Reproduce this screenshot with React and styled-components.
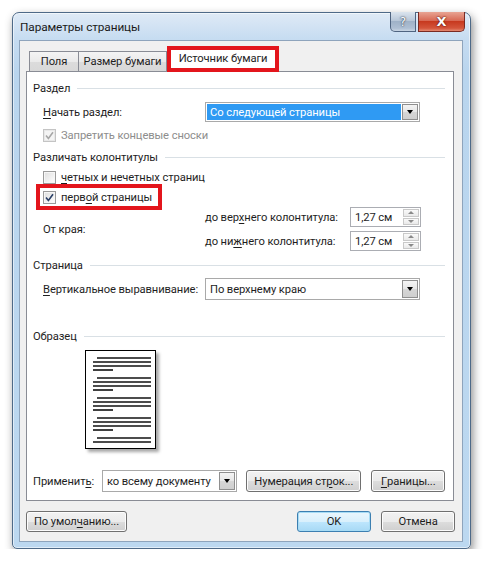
import React from "react";
import styled, { createGlobalStyle, css } from "styled-components";

const GlobalStyle = createGlobalStyle`
  html, body { margin: 0; padding: 0; background: #ffffff; }
  body {
    font-family: Roboto, "Noto Sans", sans-serif;
    font-size: 11.2px;
    letter-spacing: -0.1px;
    color: #1e1e1e;
  }
  * { box-sizing: border-box; }
`;

const Window = styled.div`
  margin: 12px 0 0 12px;
  width: 459px;
  height: 537px;
  border: 1px solid #4e6a88;
  border-radius: 7px 7px 5px 5px;
  background: linear-gradient(to bottom, #dfeaf6 0px, #c6dcf1 26px, #b9d5ee 60px, #bcd8f0 100%);
  box-shadow: 2px 4px 10px rgba(0, 0, 0, 0.45), inset 0 0 0 1px rgba(255, 255, 255, 0.55);
  display: flex;
  flex-direction: column;
`;

const TitleBar = styled.div`
  height: 27px;
  display: flex;
  align-items: flex-start;
`;

const TitleText = styled.div`
  padding-left: 7px;
  line-height: 29px;
  font-size: 11.8px;
  color: #1a1a1a;
  flex: 1;
`;

const CaptionButtons = styled.div`
  display: flex;
  gap: 2px;
  margin-right: 5px;
  margin-top: -1px;
`;

const CaptionButton = styled.div`
  height: 20px;
  display: flex;
  align-items: center;
  justify-content: center;
  border: 1px solid #4f6480;
  border-top: none;
  color: #fff;
  font-family: "DejaVu Sans", sans-serif;
  font-weight: bold;
  letter-spacing: 0;
  ${(p) =>
    p.$close
      ? css`
          width: 47px;
          border-radius: 0 0 5px 0;
          border-color: #7a2a22;
          background: linear-gradient(to bottom, #e8a493 0%, #d86a55 45%, #c7391f 50%, #d4553b 85%, #e48a72 100%);
          font-size: 13px;
          text-shadow: 0 0 2px #5a1008, 0 0 1px #5a1008;
        `
      : css`
          width: 26px;
          border-radius: 0 0 0 5px;
          background: linear-gradient(to bottom, #dbe4ee 0%, #b8c7d8 45%, #9fb2c8 50%, #aebfd3 85%, #c9d6e4 100%);
          font-size: 12px;
          font-weight: normal;
          text-shadow: 0 0 2px #2b3b50, 0 0 1px #2b3b50;
        `}
`;

const Client = styled.div`
  flex: 1;
  margin: 0 7px 6px 6px;
  background: #f0f0f0;
  border: 1px solid #8ea4bc;
  display: flex;
  flex-direction: column;
`;

const TabStrip = styled.div`
  margin-top: 5px;
  padding-left: 9px;
  height: 26px;
  display: flex;
  align-items: flex-end;
  position: relative;
  z-index: 2;
`;

const Tab = styled.div`
  height: 20px;
  display: flex;
  align-items: center;
  justify-content: center;
  width: ${(p) => p.$w}px;
  border: 1px solid #898c95;
  border-bottom: none;
  margin-right: -1px;
  margin-bottom: 1px;
  background: linear-gradient(to bottom, #f4f4f4 0%, #eaeaea 50%, #dcdcdc 51%, #d8d8d8 100%);
`;

const ActiveTab = styled.div`
  height: 26px;
  width: 112px;
  margin-left: 1px;
  border: 4px solid #e3151c;
  background: #ffffff;
  display: flex;
  align-items: center;
  justify-content: center;
  padding-bottom: 1px;
`;

const Panel = styled.div`
  margin: -1px 8px 0 6px;
  height: 430px;
  background: #ffffff;
  border: 1px solid #898c95;
  padding: 0 8px 0 6px;
  display: flex;
  flex-direction: column;
  position: relative;
  z-index: 1;
`;

const GroupTitle = styled.div`
  height: 16px;
  margin-top: ${(p) => p.$mt}px;
  display: flex;
  align-items: center;
  gap: 7px;
  &::after {
    content: "";
    flex: 1;
    height: 1px;
    background: #d9e0e5;
    margin-top: 1px;
  }
`;

const Row = styled.div`
  height: ${(p) => p.$h}px;
  margin-top: ${(p) => p.$mt}px;
  padding-left: 10px;
  display: flex;
  align-items: center;
`;

const Label = styled.span`
  width: ${(p) => (p.$w ? `${p.$w}px` : "auto")};
  flex-shrink: 0;
  white-space: nowrap;
  color: ${(p) => (p.$disabled ? "#8d8d8d" : "inherit")};
`;

const U = styled.span`
  text-decoration: underline;
  text-underline-offset: 2px;
`;

const Check = styled.span`
  width: 13px;
  height: 13px;
  flex-shrink: 0;
  margin-right: 5px;
  border: 1px solid ${(p) => (p.$disabled ? "#c4c4c4" : "#9a9a9a")};
  background: ${(p) =>
    p.$disabled
      ? "#f4f4f4"
      : "linear-gradient(135deg, #dedede 0%, #f1f1f1 60%, #ffffff 100%)"};
  box-shadow: inset 0 0 0 1px ${(p) => (p.$disabled ? "#e8e8e8" : "#f6f6f6")};
  display: flex;
  align-items: center;
  justify-content: center;
`;

const CheckMark = ({ color }) => (
  <svg width="9" height="9" viewBox="0 0 9 9">
    <path d="M1 4.5 L3.4 7.4 L8 1.2" fill="none" stroke={color} strokeWidth="1.6" />
  </svg>
);

const RedFrame = styled.div`
  display: inline-flex;
  align-items: center;
  border: 4px solid #e3151c;
  height: 26px;
  margin: -5px 0 -5px -7px;
  padding: 0 6px 0 3px;
`;

const Combo = styled.div`
  width: ${(p) => p.$w}px;
  height: ${(p) => p.$h}px;
  border: 1px solid #a9a9a9;
  background: #fff;
  display: flex;
  padding: 1px;
  gap: 1px;
`;

const ComboValue = styled.div`
  flex: 1;
  display: flex;
  align-items: center;
  padding-left: 3px;
  white-space: nowrap;
  overflow: hidden;
  ${(p) =>
    p.$selected &&
    css`
      background: #2f9af3;
      color: #ffffff;
    `}
`;

const DropButton = styled.div`
  width: 16px;
  border: 1px solid #8f8f8f;
  background: linear-gradient(to bottom, #f4f4f4 0%, #e6e6e6 50%, #d6d6d6 51%, #cfcfcf 100%);
  display: flex;
  align-items: center;
  justify-content: center;
`;

const Triangle = styled.span`
  width: 0;
  height: 0;
  border-left: 3.5px solid transparent;
  border-right: 3.5px solid transparent;
  border-top: 4px solid #000;
  ${(p) =>
    p.$up &&
    css`
      border-top: none;
      border-bottom: 3px solid #8a8a8a;
    `}
  ${(p) =>
    p.$small &&
    css`
      border-left-width: 3px;
      border-right-width: 3px;
      border-top-width: 3px;
      border-top-color: #8a8a8a;
    `}
`;

const MarginBlock = styled.div`
  margin-top: 2px;
  padding-left: 10px;
  display: flex;
  align-items: center;
`;

const MarginColumn = styled.div`
  display: flex;
  flex-direction: column;
  gap: 4px;
`;

const SpinRow = styled.div`
  height: 20px;
  display: flex;
  align-items: center;
`;

const Spin = styled.div`
  width: 71px;
  height: 20px;
  border: 1px solid #abadb3;
  background: #fff;
  display: flex;
  padding: 1px;
`;

const SpinValue = styled.div`
  flex: 1;
  display: flex;
  align-items: center;
  padding-left: 3px;
`;

const SpinButtons = styled.div`
  width: 16px;
  display: flex;
  flex-direction: column;
  gap: 1px;
`;

const SpinButton = styled.div`
  flex: 1;
  border: 1px solid #c9c9c9;
  background: linear-gradient(to bottom, #fafafa, #e9e9e9);
  display: flex;
  align-items: center;
  justify-content: center;
`;

const PreviewWrap = styled.div`
  margin-top: 6px;
  padding-left: 52px;
  display: flex;
`;

const PreviewPage = styled.div`
  width: 71px;
  height: 99px;
  border: 1px solid #000;
  background: #fff;
  box-shadow: 3px 3px 3px rgba(0, 0, 0, 0.35);
  display: flex;
`;

const ApplyRow = styled.div`
  margin-top: auto;
  margin-bottom: 8px;
  display: flex;
  align-items: center;
  height: 22px;
`;

const Button = styled.div`
  width: ${(p) => p.$w}px;
  height: ${(p) => p.$h || 21}px;
  margin-left: ${(p) => p.$ml || 0}px;
  border: 1px solid ${(p) => (p.$focus ? "#3c7fb1" : "#707070")};
  border-radius: 3px;
  background: linear-gradient(to bottom, #f2f2f2 0%, #ebebeb 50%, #dddddd 51%, #cfcfcf 100%);
  box-shadow: inset 0 0 0 1px ${(p) => (p.$focus ? "#a7dcf5" : "#fcfcfc")};
  display: flex;
  align-items: center;
  justify-content: center;
  white-space: nowrap;
  ${(p) =>
    p.$focus &&
    css`
      background: linear-gradient(to bottom, #eaf6fd 0%, #d9f0fc 50%, #bee6fd 51%, #a7d9f5 100%);
    `}
`;

const BottomRow = styled.div`
  margin-top: 10px;
  padding: 0 7px 0 6px;
  display: flex;
  align-items: center;
`;

const Spacer = styled.div`
  flex: 1;
`;

function PageLines() {
  const groups = [0, 20, 40, 60];
  const lines = [];
  groups.forEach((g) => {
    lines.push([11, 65, 7 + g]);
    lines.push([7, 65, 11 + g]);
    lines.push([7, 65, 15 + g]);
    lines.push([7, 27, 19 + g]);
  });
  lines.push([11, 65, 87]);
  lines.push([7, 65, 91]);
  return (
    <svg width="69" height="97" viewBox="0 0 69 97">
      {lines.map(([x1, x2, y], i) => (
        <line key={i} x1={x1} x2={x2} y1={y} y2={y} stroke="#111" strokeWidth="1.6" />
      ))}
    </svg>
  );
}

function SpinBox() {
  return (
    <Spin>
      <SpinValue>1,27 см</SpinValue>
      <SpinButtons>
        <SpinButton>
          <Triangle $up />
        </SpinButton>
        <SpinButton>
          <Triangle $small />
        </SpinButton>
      </SpinButtons>
    </Spin>
  );
}

export default function App() {
  return (
    <>
      <GlobalStyle />
      <Window>
        <TitleBar>
          <TitleText>Параметры страницы</TitleText>
          <CaptionButtons>
            <CaptionButton>?</CaptionButton>
            <CaptionButton $close>X</CaptionButton>
          </CaptionButtons>
        </TitleBar>
        <Client>
          <TabStrip>
            <Tab $w={50}>Поля</Tab>
            <Tab $w={89}>Размер бумаги</Tab>
            <ActiveTab>Источник бумаги</ActiveTab>
          </TabStrip>
          <Panel>
            <GroupTitle $mt={8}>Раздел</GroupTitle>
            <Row $h={20} $mt={6}>
              <Label $w={162}>
                <U>Н</U>ачать раздел:
              </Label>
              <Combo $w={215} $h={20}>
                <ComboValue $selected>Со следующей страницы</ComboValue>
                <DropButton>
                  <Triangle />
                </DropButton>
              </Combo>
            </Row>
            <Row $h={16} $mt={5}>
              <Check $disabled>
                <CheckMark color="#a6a6a6" />
              </Check>
              <Label $disabled>Запретить концевые сноски</Label>
            </Row>

            <GroupTitle $mt={6}>Различать колонтитулы</GroupTitle>
            <Row $h={16} $mt={4}>
              <Check />
              <Label>
                <U>ч</U>етных и нечетных страниц
              </Label>
            </Row>
            <Row $h={16} $mt={4}>
              <RedFrame>
                <Check>
                  <CheckMark color="#2a3f66" />
                </Check>
                <Label>
                  перв<U>о</U>й страницы
                </Label>
              </RedFrame>
            </Row>
            <MarginBlock>
              <Label $w={162}>От края:</Label>
              <MarginColumn>
                <SpinRow>
                  <Label $w={145}>
                    до вер<U>х</U>него колонтитула:
                  </Label>
                  <SpinBox />
                </SpinRow>
                <SpinRow>
                  <Label $w={145}>
                    до ни<U>ж</U>него колонтитула:
                  </Label>
                  <SpinBox />
                </SpinRow>
              </MarginColumn>
            </MarginBlock>

            <GroupTitle $mt={6}>Страница</GroupTitle>
            <Row $h={22} $mt={5}>
              <Label $w={162}>
                <U>В</U>ертикальное выравнивание:
              </Label>
              <Combo $w={215} $h={22}>
                <ComboValue>По верхнему краю</ComboValue>
                <DropButton>
                  <Triangle />
                </DropButton>
              </Combo>
            </Row>

            <GroupTitle $mt={28}>Образец</GroupTitle>
            <PreviewWrap>
              <PreviewPage>
                <PageLines />
              </PreviewPage>
            </PreviewWrap>

            <ApplyRow>
              <Label $w={69}>
                Применит<U>ь</U>:
              </Label>
              <Combo $w={136} $h={22}>
                <ComboValue>ко всему документу</ComboValue>
                <DropButton>
                  <Triangle />
                </DropButton>
              </Combo>
              <Button $w={116} $h={22} $ml={9}>
                Нумерация ст<U>р</U>ок...
              </Button>
              <Button $w={74} $h={22} $ml={10}>
                <U>Г</U>раницы...
              </Button>
            </ApplyRow>
          </Panel>
          <BottomRow>
            <Button $w={101}>
              По умол<U>ч</U>анию...
            </Button>
            <Spacer />
            <Button $w={74} $focus>
              OK
            </Button>
            <Button $w={74} $ml={10}>
              Отмена
            </Button>
          </BottomRow>
        </Client>
      </Window>
    </>
  );
}
